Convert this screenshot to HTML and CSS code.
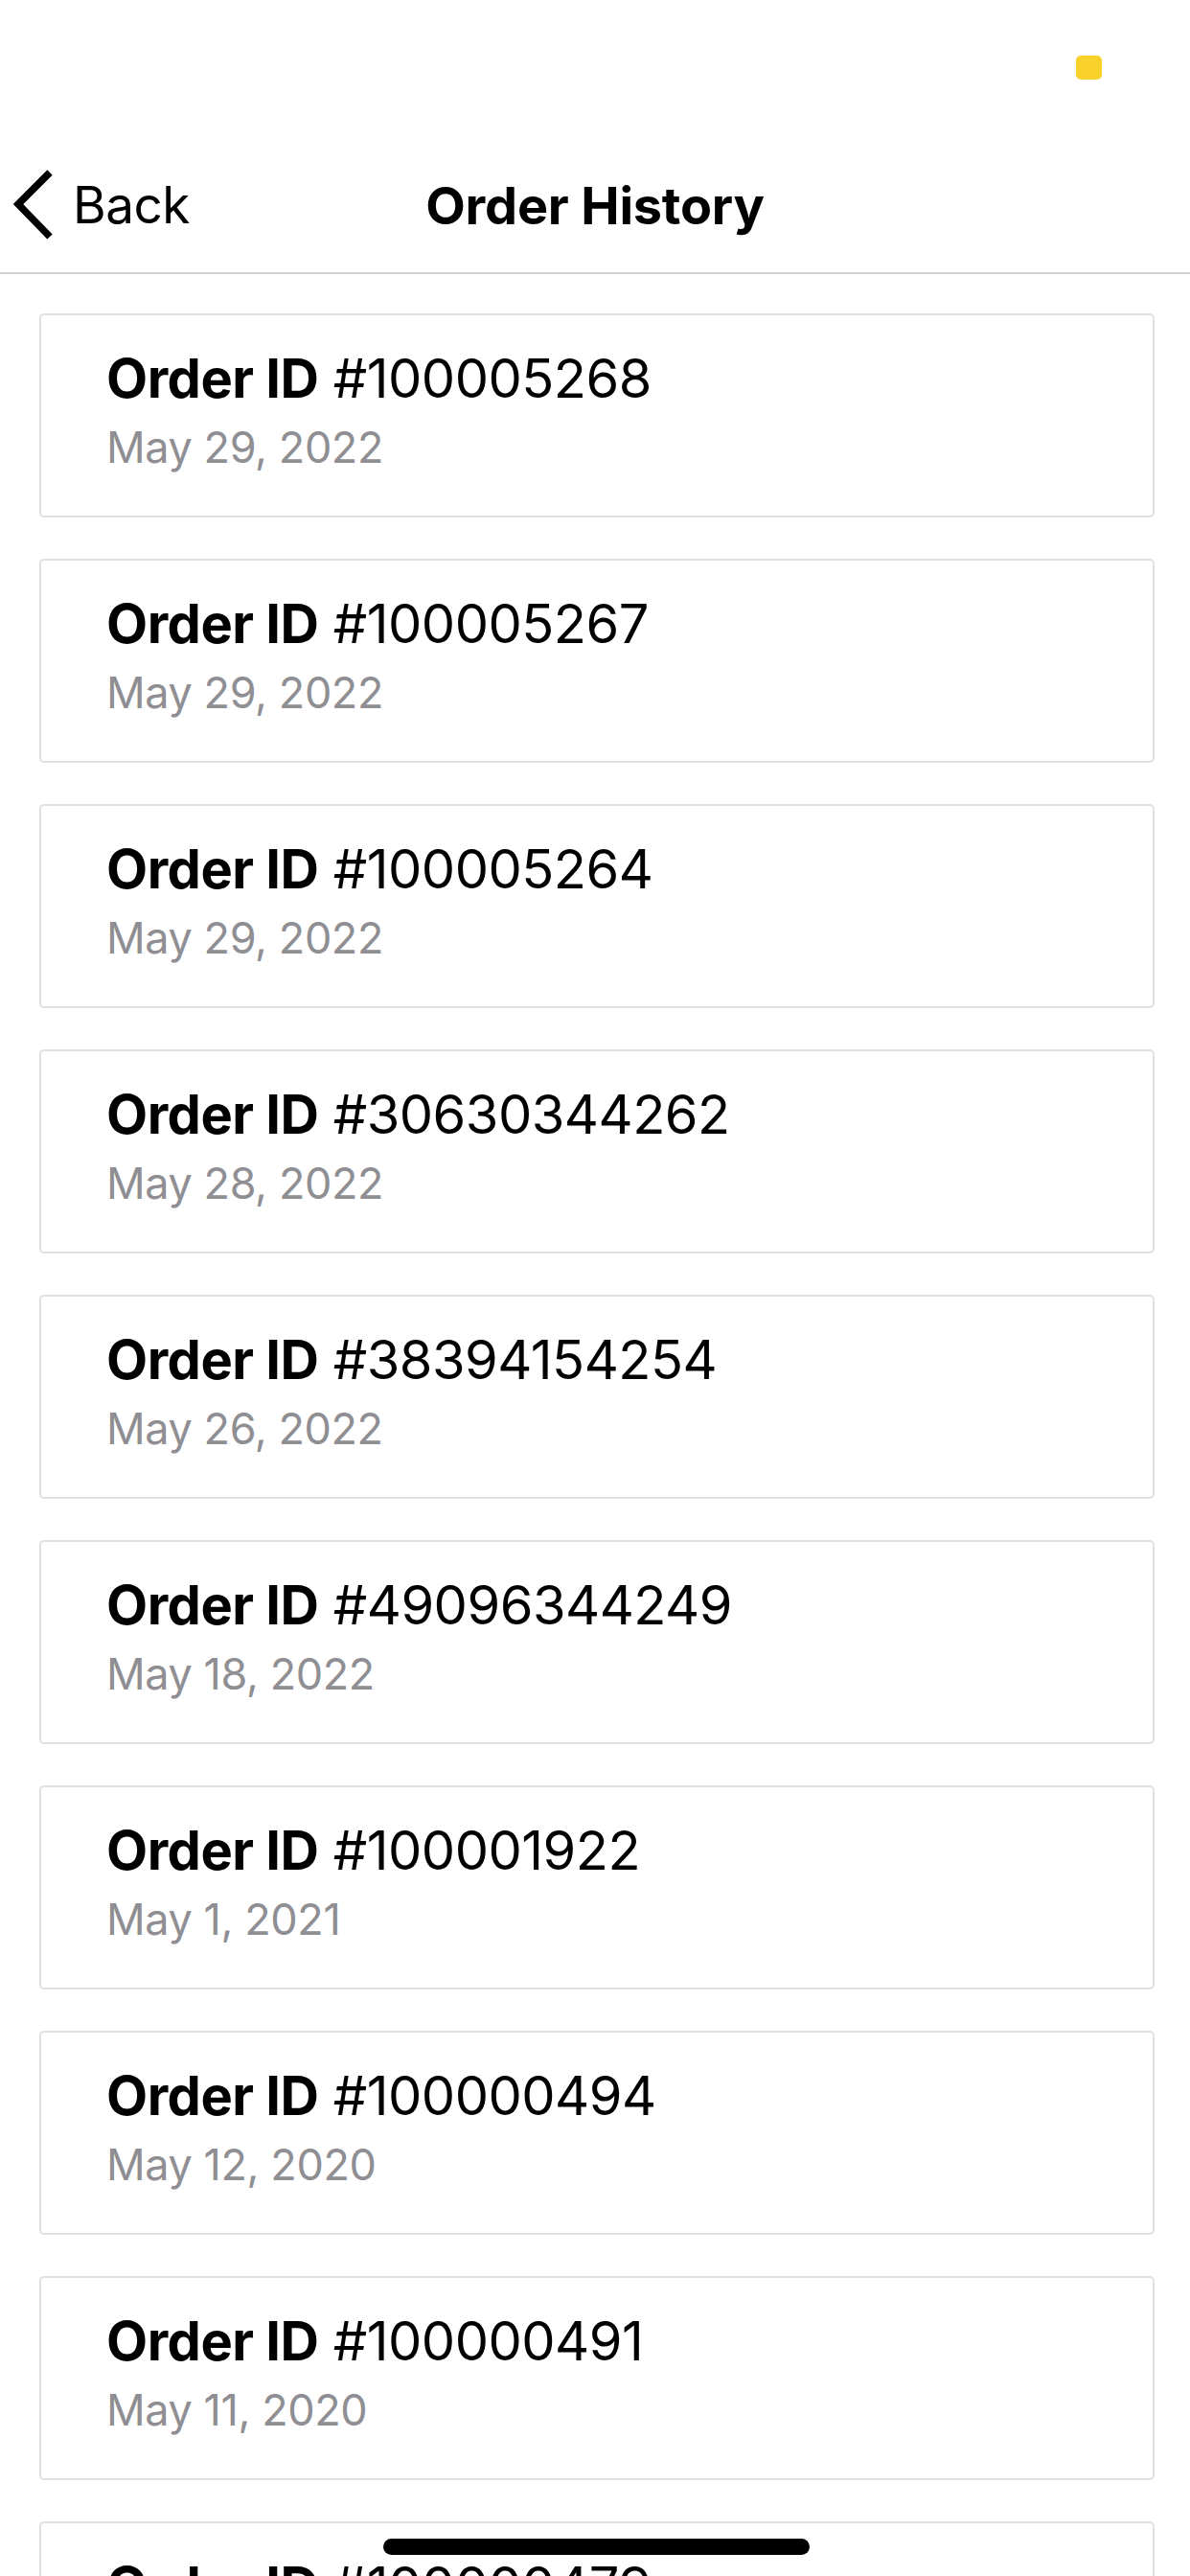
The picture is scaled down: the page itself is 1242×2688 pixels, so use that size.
FILE: index.html
```html
<!DOCTYPE html>
<html lang="en">
<head>
<meta charset="utf-8">
<title>Order History</title>
<link rel="stylesheet" href="styles.css">
</head>
<body>
<div class="screen">
  <div class="status-bar">
    <span class="status-dot"></span>
  </div>
  <header class="nav">
    <a class="back" href="#">
      <svg class="chevron" width="46" height="74" viewBox="0 0 46 74" aria-hidden="true">
        <polyline points="40,3 7,36 40,70" fill="none" stroke="#000" stroke-width="7.5" stroke-linecap="butt" stroke-linejoin="miter"/>
      </svg>
      <span class="back-label">Back</span>
    </a>
    <h1 class="title">Order History</h1>
  </header>
  <main class="list">
    <div class="card"><div class="order"><b>Order ID</b> #100005268</div><div class="date">May 29, 2022</div></div>
    <div class="card"><div class="order"><b>Order ID</b> #100005267</div><div class="date">May 29, 2022</div></div>
    <div class="card"><div class="order"><b>Order ID</b> #100005264</div><div class="date">May 29, 2022</div></div>
    <div class="card"><div class="order"><b>Order ID</b> #30630344262</div><div class="date">May 28, 2022</div></div>
    <div class="card"><div class="order"><b>Order ID</b> #38394154254</div><div class="date">May 26, 2022</div></div>
    <div class="card"><div class="order"><b>Order ID</b> #49096344249</div><div class="date">May 18, 2022</div></div>
    <div class="card"><div class="order"><b>Order ID</b> #100001922</div><div class="date">May 1, 2021</div></div>
    <div class="card"><div class="order"><b>Order ID</b> #100000494</div><div class="date">May 12, 2020</div></div>
    <div class="card"><div class="order"><b>Order ID</b> #100000491</div><div class="date">May 11, 2020</div></div>
    <div class="card"><div class="order"><b>Order ID</b> #100000479</div><div class="date">May 5, 2020</div></div>
  </main>
  <div class="home-indicator"></div>
</div>
</body>
</html>
```
FILE: styles.css
```css
html, body {
  margin: 0;
  padding: 0;
  background: #fff;
}
body {
  font-family: Inter, "Liberation Sans", sans-serif;
  color: #000;
}
.screen {
  position: relative;
  width: 1242px;
  height: 2688px;
  overflow: hidden;
  background: #fff;
}
.status-bar {
  position: relative;
  height: 132px;
}
.status-dot {
  position: absolute;
  left: 1123px;
  top: 58px;
  width: 27px;
  height: 25px;
  border-radius: 5px;
  background: #f8d12a;
}
.nav {
  position: relative;
  height: 154px;
  display: flex;
  align-items: center;
  justify-content: center;
  border-bottom: 2px solid #d2d2d2;
  box-sizing: border-box;
  padding-top: 14px;
}
.back {
  position: absolute;
  left: 12px;
  top: 45px;
  display: flex;
  align-items: center;
  gap: 18px;
  color: #000;
  text-decoration: none;
}
.chevron {
  display: block;
}
.back-label {
  font-size: 53px;
  line-height: 1;
  letter-spacing: -0.5px;
}
.title {
  margin: 0;
  font-size: 54px;
  font-weight: 700;
  line-height: 1;
  letter-spacing: -0.2px;
}
.list {
  display: flex;
  flex-direction: column;
  gap: 43px;
  padding: 41px 37px 0 41px;
}
.card {
  height: 213px;
  flex: none;
  box-sizing: border-box;
  border: 2px solid #e0e0e0;
  border-radius: 5px;
  padding: 33px 0 0 68px;
}
.order {
  font-size: 56px;
  line-height: 1.2;
  font-weight: 400;
  letter-spacing: -0.5px;
}
.order b {
  font-weight: 700;
}
.date {
  margin-top: 11px;
  font-size: 45px;
  line-height: 1.2;
  color: #8e8e93;
  letter-spacing: -0.4px;
}
.home-indicator {
  position: absolute;
  left: 400px;
  bottom: 22px;
  width: 445px;
  height: 17px;
  border-radius: 9px;
  background: #000;
}
```
